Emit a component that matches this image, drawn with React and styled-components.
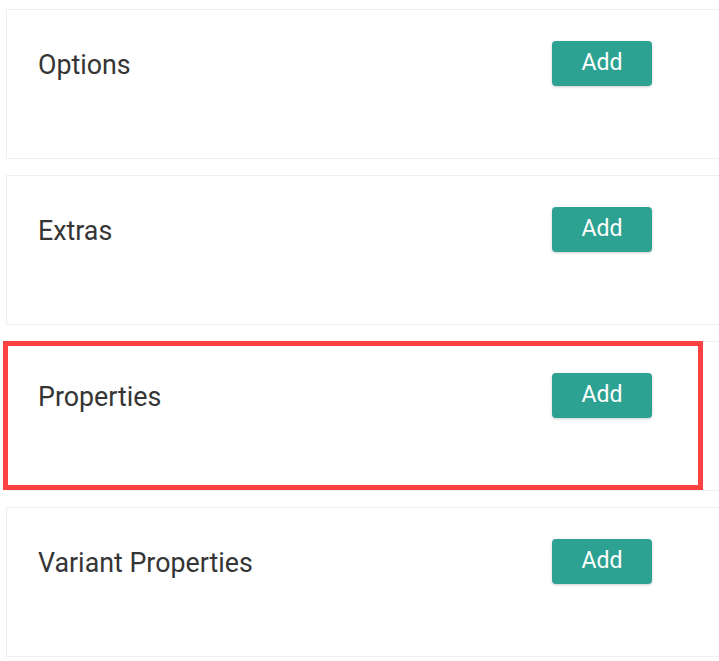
import React from "react";
import styled, { createGlobalStyle } from "styled-components";

const GlobalStyle = createGlobalStyle`
  html, body {
    margin: 0;
    padding: 0;
    background: #ffffff;
    overflow: hidden;
  }
  body {
    font-family: Roboto, "Liberation Sans", Arial, sans-serif;
  }
`;

const Page = styled.div`
  display: flex;
  flex-direction: column;
  gap: 16px;
  box-sizing: border-box;
  width: 100%;
  padding: 9px 0 0 6px;
`;

const Card = styled.section`
  position: relative;
  box-sizing: border-box;
  height: 150px;
  padding: 31px 0 0 31px;
  background: #ffffff;
  border: 1px solid #efefef;
  border-right: none;

  ${({ $highlight }) =>
    $highlight &&
    `
    &::after {
      content: "";
      position: absolute;
      left: -4px;
      top: -1px;
      width: 700px;
      height: 149px;
      box-sizing: border-box;
      border: 5px solid #fb4141;
      pointer-events: none;
    }
  `}
`;

const Header = styled.div`
  display: flex;
  align-items: center;
  justify-content: space-between;
  width: 614px;
`;

const Title = styled.h3`
  margin: 0;
  padding-top: 2px;
  font-size: 26.8px;
  font-weight: 400;
  color: #353535;
`;

const AddButton = styled.button`
  width: 100px;
  height: 45px;
  border: none;
  border-radius: 4px;
  background: #2ea292;
  color: #ffffff;
  font-family: Roboto, "Liberation Sans", Arial, sans-serif;
  font-size: 23px;
  font-weight: 400;
  box-shadow: 0 1px 3px rgba(0, 0, 0, 0.2);
  cursor: pointer;
  padding: 0 0 2px;
`;

const sections = [
  { title: "Options" },
  { title: "Extras" },
  { title: "Properties", highlight: true },
  { title: "Variant Properties" },
];

const App = () => {
  return (
    <>
      <GlobalStyle />
      <Page>
        {sections.map((s) => (
          <Card key={s.title} $highlight={s.highlight}>
            <Header>
              <Title>{s.title}</Title>
              <AddButton>Add</AddButton>
            </Header>
          </Card>
        ))}
      </Page>
    </>
  );
};

export default App;
